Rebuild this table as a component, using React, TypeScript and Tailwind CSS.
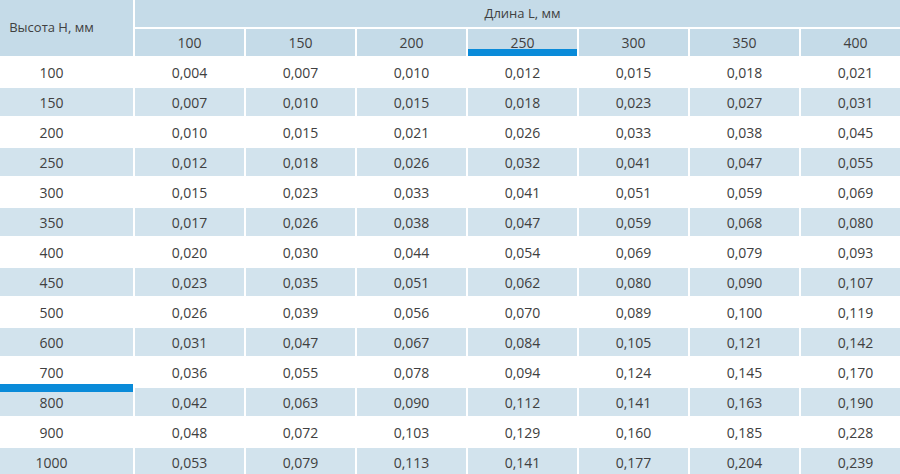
import React from 'react'

const lengths = ['100', '150', '200', '250', '300', '350', '400']

const rows: [string, string[]][] = [
  ['100', ['0,004', '0,007', '0,010', '0,012', '0,015', '0,018', '0,021']],
  ['150', ['0,007', '0,010', '0,015', '0,018', '0,023', '0,027', '0,031']],
  ['200', ['0,010', '0,015', '0,021', '0,026', '0,033', '0,038', '0,045']],
  ['250', ['0,012', '0,018', '0,026', '0,032', '0,041', '0,047', '0,055']],
  ['300', ['0,015', '0,023', '0,033', '0,041', '0,051', '0,059', '0,069']],
  ['350', ['0,017', '0,026', '0,038', '0,047', '0,059', '0,068', '0,080']],
  ['400', ['0,020', '0,030', '0,044', '0,054', '0,069', '0,079', '0,093']],
  ['450', ['0,023', '0,035', '0,051', '0,062', '0,080', '0,090', '0,107']],
  ['500', ['0,026', '0,039', '0,056', '0,070', '0,089', '0,100', '0,119']],
  ['600', ['0,031', '0,047', '0,067', '0,084', '0,105', '0,121', '0,142']],
  ['700', ['0,036', '0,055', '0,078', '0,094', '0,124', '0,145', '0,170']],
  ['800', ['0,042', '0,063', '0,090', '0,112', '0,141', '0,163', '0,190']],
  ['900', ['0,048', '0,072', '0,103', '0,129', '0,160', '0,185', '0,228']],
  ['1000', ['0,053', '0,079', '0,113', '0,141', '0,177', '0,204', '0,239']],
]

export default function App() {
  return (
    <div className="w-[900px] h-[474px] overflow-hidden bg-white text-[#404040] font-['Open_Sans',sans-serif]">
      <div className="w-[911px] grid grid-cols-[133px_repeat(7,109px)] gap-[2px]">
        {/* Header */}
        <div className="row-span-2 bg-[#c5dbe8] flex items-center justify-center pr-[30px] text-[13px]">
          Высота H, мм
        </div>
        <div className="col-span-7 h-[27px] bg-[#c5dbe8] flex items-center justify-center text-[13px]">
          Длина L, мм
        </div>
        {lengths.map((l) => (
          <div key={l} className="relative h-[27px] bg-[#c5dbe8] flex items-center justify-center text-[14px]">
            {l}
            {l === '250' && <div className="absolute left-0 right-0 bottom-0 h-[7px] bg-[#0a8bd9]" />}
          </div>
        ))}

        {/* Body */}
        {rows.map(([h, vals], i) => {
          const bg = i % 2 === 1 ? 'bg-[#d2e3ed]' : 'bg-white'
          return (
            <React.Fragment key={h}>
              <div className={`relative h-[28px] ${bg} flex items-center justify-center pr-[30px] text-[14px]`}>
                {h}
                {h === '800' && <div className="absolute left-0 right-0 top-[-4px] h-[8px] bg-[#0a8bd9] z-10" />}
              </div>
              {vals.map((v, j) => (
                <div key={j} className={`h-[28px] ${bg} flex items-center justify-center text-[14px]`}>
                  {v}
                </div>
              ))}
            </React.Fragment>
          )
        })}
      </div>
    </div>
  )
}
